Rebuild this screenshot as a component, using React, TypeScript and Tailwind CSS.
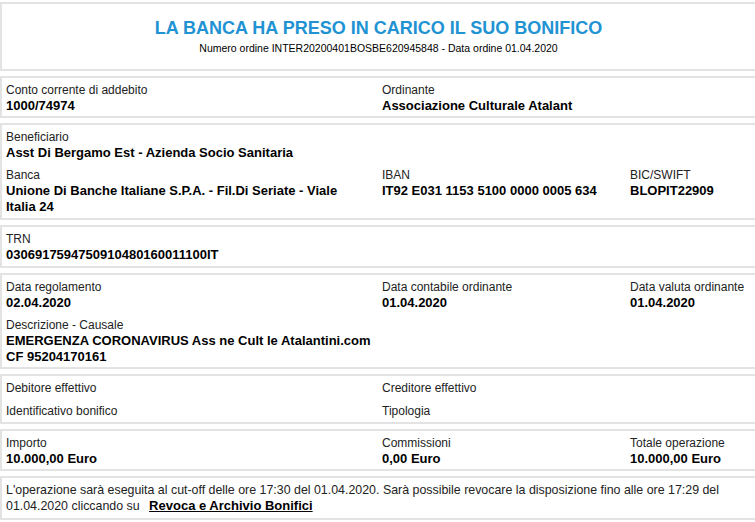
import React from "react";

const Field = ({ label, value, className = "" }: { label: string; value?: React.ReactNode; className?: string }) => (
  <div className={className}>
    <div className="text-[12px] leading-[15px] text-[#222]">{label}</div>
    {value !== undefined && <div className="text-[13px] leading-[16px] font-bold text-black">{value}</div>}
  </div>
);

const Panel = ({ children, className = "" }: { children: React.ReactNode; className?: string }) => (
  <div className={`border-2 border-[#e3e3e3] bg-white pl-[4px] pt-[5px] ${className}`}>{children}</div>
);

export default function App() {
  return (
    <div
      className="w-[755px] h-[522px] overflow-hidden bg-white"
      style={{ fontFamily: '"Liberation Sans", Arial, sans-serif' }}
    >
      <div className="w-[757px] pt-[2px] flex flex-col gap-[5px]">
        <div className="border-2 border-[#e3e3e3] pt-[13px] pb-[14px] text-center">
          <div className="text-[18px] leading-[22px] font-bold text-[#2193d3]">LA BANCA HA PRESO IN CARICO IL SUO BONIFICO</div>
          <div className="mt-[2px] text-[10.5px] leading-[14px] text-black">
            Numero ordine INTER20200401BOSBE620945848 - Data ordine 01.04.2020
          </div>
        </div>

        <Panel className="pb-[2px]">
          <div className="grid grid-cols-[376px_1fr]">
            <Field label="Conto corrente di addebito" value="1000/74974" />
            <Field label="Ordinante" value="Associazione Culturale Atalant" />
          </div>
        </Panel>

        <Panel className="pb-[3px]">
          <div className="flex flex-col gap-[7px]">
            <Field label="Beneficiario" value="Asst Di Bergamo Est - Azienda Socio Sanitaria" />
            <div className="grid grid-cols-[376px_248px_1fr]">
              <Field
                label="Banca"
                value="Unione Di Banche Italiane S.P.A. - Fil.Di Seriate - Viale Italia 24"
                className="pr-[20px]"
              />
              <Field label="IBAN" value="IT92 E031 1153 5100 0000 0005 634" />
              <Field label="BIC/SWIFT" value="BLOPIT22909" />
            </div>
          </div>
        </Panel>

        <Panel className="pb-[3px]">
          <Field label="TRN" value="0306917594750910480160011100IT" />
        </Panel>

        <Panel className="pb-[2px]">
          <div className="flex flex-col gap-[7px]">
            <div className="grid grid-cols-[376px_248px_1fr]">
              <Field label="Data regolamento" value="02.04.2020" />
              <Field label="Data contabile ordinante" value="01.04.2020" />
              <Field label="Data valuta ordinante" value="01.04.2020" />
            </div>
            <div className="grid grid-cols-[376px_1fr]">
              <Field
                label="Descrizione - Causale"
                value={
                  <>
                    EMERGENZA CORONAVIRUS Ass ne Cult le Atalantini.com
                    <br />
                    CF 95204170161
                  </>
                }
              />
            </div>
          </div>
        </Panel>

        <Panel className="pb-[3px]">
          <div className="grid grid-cols-[376px_1fr] gap-y-[8px]">
            <Field label="Debitore effettivo" />
            <Field label="Creditore effettivo" />
            <Field label="Identificativo bonifico" />
            <Field label="Tipologia" />
          </div>
        </Panel>

        <Panel className="pb-[2px]">
          <div className="grid grid-cols-[376px_248px_1fr]">
            <Field label="Importo" value="10.000,00 Euro" />
            <Field label="Commissioni" value="0,00 Euro" />
            <Field label="Totale operazione" value="10.000,00 Euro" />
          </div>
        </Panel>

        <Panel className="pb-[4px]">
          <div className="text-[12.4px] leading-[15px] text-[#222] pr-[20px]">
            L'operazione sarà eseguita al cut-off delle ore 17:30 del 01.04.2020. Sarà possibile revocare la disposizione fino alle ore 17:29 del
            01.04.2020 cliccando su{" "}
            <a className="ml-[6px] text-[13px] font-bold text-black underline cursor-pointer">Revoca e Archivio Bonifici</a>
          </div>
        </Panel>
      </div>
    </div>
  );
}
